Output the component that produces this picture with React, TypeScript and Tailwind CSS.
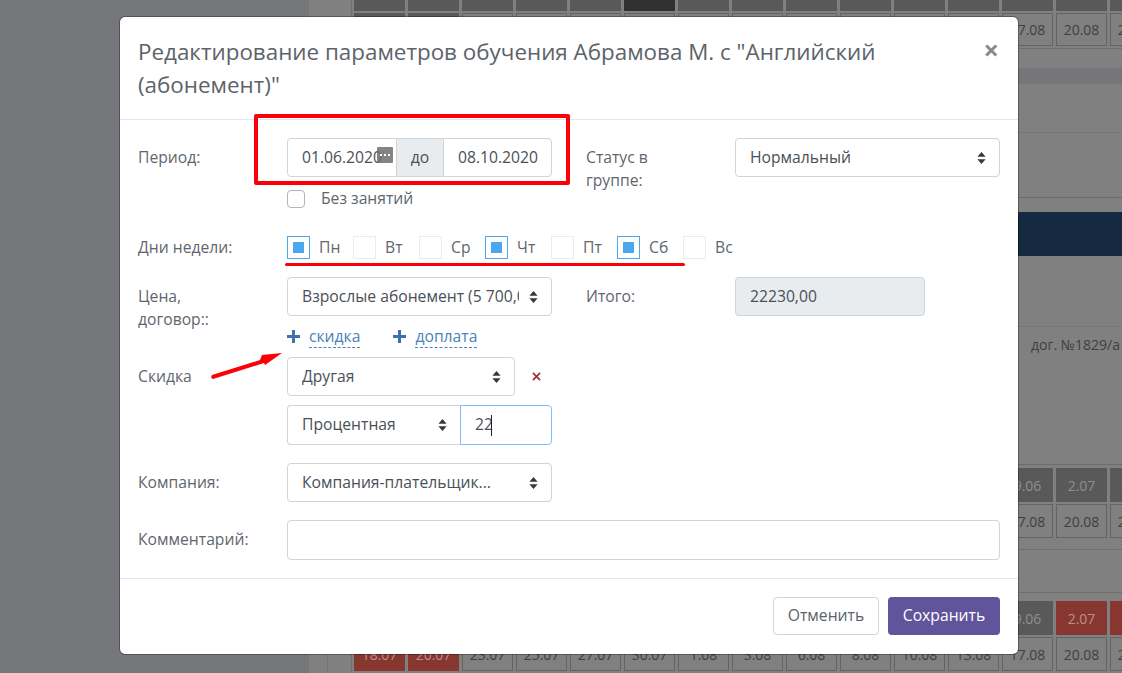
const DATES = ["18.07", "20.07", "23.07", "25.07", "27.07", "30.07", "1.08", "3.08", "6.08", "8.08", "10.08", "13.08", "17.08", "20.08", "24.08"];
const TOP_DATES = ["9.06", "11.06", "15.06", "18.06", "20.06", "22.06", "25.06", "27.06", "29.06", "2.07", "6.07", "9.06", "9.06", "2.07", "4.07"];

function ChipRow({ labels, height, filled, dark, red }: { labels: string[]; height: string; filled?: number[]; dark?: number[]; red?: number[] }) {
  return (
    <div className={`flex gap-[3px] pl-[45px] overflow-hidden shrink-0 ${height}`}>
      {labels.map((label, i) => {
        let cls = "border border-[#646464] text-[#3f3f3f]";
        if (filled?.includes(i)) cls = "bg-[#595959] text-[#8f8f8f]";
        if (dark?.includes(i)) cls = "bg-[#303030] text-[#303030]";
        if (red?.includes(i)) cls = "bg-[#873730] text-[#b98f8b]";
        return (
          <div key={i} className={`w-[51px] shrink-0 flex items-center justify-center text-[14px] ${cls}`}>
            {label}
          </div>
        );
      })}
    </div>
  );
}

function Arrows() {
  return (
    <svg viewBox="0 0 9 12" className="w-[9px] h-[12px] shrink-0" fill="#343a40">
      <path d="M4.5 0 8.6 4.8H.4ZM4.5 12 .4 7.2h8.2Z" />
    </svg>
  );
}

function Select({ text, className = "" }: { text: string; className?: string }) {
  return (
    <div className={`h-[39px] flex items-center pl-[14px] pr-[13px] bg-white border border-[#ced4da] rounded-[4px] ${className}`}>
      <span className="flex-1 overflow-hidden whitespace-nowrap">{text}</span>
      <span className="ml-[10px] flex"><Arrows /></span>
    </div>
  );
}

function DayBox({ label, checked }: { label: string; checked?: boolean }) {
  return (
    <div className="w-[66px] flex items-center shrink-0">
      <div className={`w-[23px] h-[23px] flex items-center justify-center border ${checked ? "border-[#4aa8ec]" : "border-[#e9ecef]"}`}>
        {checked && <div className="w-[11px] h-[11px] bg-[#4aa8ec]" />}
      </div>
      <span className="ml-[9px] leading-[23px]">{label}</span>
    </div>
  );
}

function AddLink({ text }: { text: string }) {
  return (
    <div className="flex items-center">
      <svg viewBox="0 0 13 13" className="w-[13px] h-[13px]" fill="#3d72ad">
        <path d="M5 0h3v5h5v3H8v5H5V8H0V5h5Z" />
      </svg>
      <span className="ml-[9px] text-[#4a82ba] border-b border-dashed border-[#4a82ba] leading-[21px]">{text}</span>
    </div>
  );
}

export default function App() {
  return (
    <div
      className="relative w-[1122px] h-[673px] overflow-hidden flex bg-[#76777a] text-[15.7px] text-[#5f666d]"
      style={{ fontFamily: '"Open Sans", "Noto Sans", sans-serif' }}
    >
      {/* page behind the overlay */}
      <div className="w-[309px] shrink-0" />
      <div className="flex-1 min-w-0 flex flex-col bg-[#808080]">
        <ChipRow labels={TOP_DATES.map(() => "")} height="h-[11px]" filled={[0, 1, 2, 3, 4, 6, 7, 8, 9, 10, 11, 12, 13, 14]} dark={[5]} />
        <div className="h-[2px] shrink-0" />
        <ChipRow labels={DATES.map((d, i) => (i > 11 ? d : ""))} height="h-[33px]" filled={[0, 1]} />
        <div className="h-[3px] shrink-0 border-b border-[#6f6f6f]" />
        <div className="h-[19px] shrink-0" />
        <div className="h-[16px] shrink-0 bg-[#74767a]" />
        <div className="h-[49px] shrink-0 border-b border-[#767676]" />
        <div className="h-[65px] shrink-0 border-b border-[#6c6c6c]" />
        <div className="h-[14px] shrink-0" />
        <div className="h-[44px] shrink-0 bg-[#152a40]" />
        <div className="h-[71px] shrink-0 border-b border-[#767676]" />
        <div className="h-[138px] shrink-0 pl-[722px] pt-[7px] border-b border-[#6c6c6c] text-[14px] whitespace-nowrap text-[#3f3f3f]">дог. №1829/а</div>
        <div className="h-[3px] shrink-0" />
        <ChipRow labels={TOP_DATES} height="h-[34px]" filled={[0, 1, 2, 3, 4, 5, 6, 7, 8, 9, 10, 11, 12, 13, 14]} />
        <div className="h-[2px] shrink-0" />
        <ChipRow labels={DATES} height="h-[34px]" />
        <div className="h-[12px] shrink-0 border-b border-[#6f6f6f]" />
        <div className="h-[43px] shrink-0 border-b border-[#6f6f6f]" />
        <div className="h-[8px] shrink-0" />
        <ChipRow labels={TOP_DATES} height="h-[34px]" filled={[0, 1, 2, 3, 4, 5, 6, 7, 8, 9, 10, 11, 12]} red={[13, 14]} />
        <div className="h-[2px] shrink-0" />
        <ChipRow labels={DATES} height="h-[34px]" red={[0, 1]} />
      </div>
      <div className="absolute left-[351px] top-0 bottom-0 w-px bg-[#6f6f6f]" />
      <div className="absolute left-[327px] top-[640px] bottom-0 w-px bg-[#737373]" />

      {/* modal */}
      <div className="absolute left-[119px] top-[16px] w-[900px] h-[639px] flex flex-col bg-white rounded-[6px] border border-black/30 bg-clip-padding">
        <div className="h-[103px] shrink-0 flex items-start pl-[18px] pr-[19px] pt-[18px] border-b border-[#e3e6ea]">
          <h2 className="w-[770px] text-[22.4px] leading-[33px] font-normal text-[#5c6369]">
            Редактирование параметров обучения Абрамова М. с "Английский (абонемент)"
          </h2>
          <span className="ml-auto text-[27px] leading-[30px] font-bold text-[#8a8a8a]">×</span>
        </div>

        <div className="flex-1 flex flex-col pl-[18px] pr-[18px] pt-[18px]">
          <div className="flex h-[39px]">
            <span className="w-[149px] shrink-0 leading-[39px]">Период:</span>
            <div className="relative flex w-[265px] h-[39px] text-[#495057]">
              <div className="w-[110px] pl-[14px] flex items-center border border-[#ced4da] rounded-l-[4px] whitespace-nowrap overflow-hidden">01.06.2020</div>
              <div className="w-[46px] flex items-center justify-center bg-[#e9ecef] border-y border-[#ced4da]">до</div>
              <div className="flex-1 pl-[14px] flex items-center border border-[#ced4da] rounded-r-[4px]">08.10.2020</div>
              <div className="absolute left-[90px] top-[9px] w-[16px] h-[16px] bg-[#6f6f6f]/85 rounded-[1px] flex items-center justify-center gap-[2px]">
                <span className="w-[2px] h-[2px] bg-white" />
                <span className="w-[2px] h-[2px] bg-white" />
                <span className="w-[2px] h-[2px] bg-white" />
              </div>
            </div>
            <span className="ml-[34px] w-[149px] pr-[40px] leading-[23px] pt-[8px] shrink-0">Статус в группе:</span>
            <Select text="Нормальный" className="w-[265px] text-[#495057]" />
          </div>

          <div className="flex items-center h-[18px] mt-[13px] pl-[149px]">
            <div className="w-[18px] h-[18px] border border-[#adb5bd] rounded-[4px]" />
            <span className="ml-[16px]">Без занятий</span>
          </div>

          <div className="flex items-center h-[23px] mt-[28px]">
            <span className="w-[149px] shrink-0">Дни недели:</span>
            <DayBox label="Пн" checked />
            <DayBox label="Вт" />
            <DayBox label="Ср" />
            <DayBox label="Чт" checked />
            <DayBox label="Пт" />
            <DayBox label="Сб" checked />
            <DayBox label="Вс" />
          </div>

          <div className="flex mt-[18px] h-[39px]">
            <span className="w-[149px] pr-[40px] shrink-0 leading-[23px] pt-[8px]">Цена, договор::</span>
            <Select text="Взрослые абонемент (5 700,00" className="w-[265px] text-[#495057]" />
            <span className="ml-[34px] w-[149px] shrink-0 leading-[39px]">Итого:</span>
            <div className="w-[190px] flex items-center pl-[14px] bg-[#e9ecef] border border-[#ced4da] rounded-[4px] text-[#495057]">22230,00</div>
          </div>

          <div className="flex h-[41px] items-center gap-[33px] pl-[149px]">
            <AddLink text="скидка" />
            <AddLink text="доплата" />
          </div>

          <div className="flex h-[39px] items-center">
            <span className="w-[149px] shrink-0">Скидка</span>
            <Select text="Другая" className="w-[228px] text-[#495057]" />
            <svg viewBox="0 0 10 10" className="ml-[17px] w-[9px] h-[9px]" stroke="#a5343a" strokeWidth="2" fill="none">
              <path d="M1 1l8 8M9 1l-8 8" />
            </svg>
          </div>

          <div className="flex h-[40px] mt-[9px] pl-[149px] text-[#495057]">
            <Select text="Процентная" className="w-[173px] h-[40px] rounded-r-none border-r-0" />
            <div className="relative w-[92px] flex items-center pl-[14px] border border-[#80bdff] rounded-r-[4px]">
              22
              <span className="absolute left-[30px] top-[9px] w-px h-[21px] bg-[#212529]" />
            </div>
          </div>

          <div className="flex h-[39px] mt-[18px] items-center">
            <span className="w-[149px] shrink-0">Компания:</span>
            <Select text="Компания-плательщик..." className="w-[265px] text-[#495057]" />
          </div>

          <div className="flex h-[40px] mt-[18px] items-center">
            <span className="w-[149px] shrink-0">Комментарий:</span>
            <div className="flex-1 h-[40px] border border-[#ced4da] rounded-[4px]" />
          </div>
        </div>

        <div className="h-[76px] shrink-0 flex items-start justify-end gap-[9px] pt-[18px] pr-[18px] border-t border-[#e3e6ea]">
          <button className="w-[106px] h-[38px] border border-[#ced4da] rounded-[4px] text-[#5c6369]">Отменить</button>
          <button className="w-[112px] h-[38px] bg-[#61549a] rounded-[4px] text-white">Сохранить</button>
        </div>
      </div>

      {/* red annotations drawn on top of the screenshot */}
      <div className="absolute left-[254px] top-[114px] w-[316px] h-[71px] border-[4px] border-[#fb0007] rounded-[2px]" />
      <div className="absolute left-[285px] top-[263px] w-[400px] h-[3px] bg-[#fb0007] rounded-full" />
      <svg className="absolute left-[205px] top-[345px]" width="85" height="40" viewBox="0 0 85 40" fill="#fb0007">
        <path d="M7 30 55 15 57 10 77 8 60 20 59 18 8 34Q5 33 7 30Z" />
      </svg>
    </div>
  );
}
